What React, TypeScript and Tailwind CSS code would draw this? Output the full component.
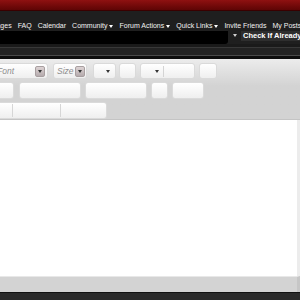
import type { ReactNode } from "react";

function Arrow({ color = "border-t-white" }: { color?: string }) {
    return <span className={`inline-block w-0 h-0 border-l-[2.5px] border-r-[2.5px] border-t-[3px] border-l-transparent border-r-transparent ${color}`} />;
}

function NavItem({ label, menu }: { label: string; menu?: boolean }) {
    return (
        <span className="flex items-center gap-[2px] whitespace-nowrap">
            {label}
            {menu && <Arrow />}
        </span>
    );
}

function Btn({ w, children, className = "" }: { w: string; children?: ReactNode; className?: string }) {
    return (
        <div className={`${w} shrink-0 h-full rounded-[3px] border border-[#dadada] bg-gradient-to-b from-[#ffffff] to-[#efefef] flex items-center ${className}`}>
            {children}
        </div>
    );
}

function DropBtn() {
    return (
        <span className="w-[10px] h-[11px] rounded-[2px] bg-gradient-to-b from-[#ddd3d4] to-[#b5abad] border border-[#a89fa0] flex items-center justify-center">
            <Arrow color="border-t-[#333]" />
        </span>
    );
}

export default function App() {
    return (
        <div className="w-[300px] h-[300px] overflow-hidden flex flex-col bg-[#1e1e1e] font-['Liberation_Sans',Arial,sans-serif]">
            {/* top red band */}
            <div className="h-[11px] shrink-0 bg-gradient-to-b from-[#8f1111] to-[#5e0505] border-b border-[#3a0000]" />

            {/* nav links */}
            <div className="h-[20px] shrink-0 bg-[#1f1f1f] pt-[10px]">
                <div className="flex gap-[6px] ml-[-44px] text-[7px] leading-[10px] text-[#f2f2f2]">
                    <NavItem label="Private Messages" />
                    <NavItem label="FAQ" />
                    <NavItem label="Calendar" />
                    <NavItem label="Community" menu />
                    <NavItem label="Forum Actions" menu />
                    <NavItem label="Quick Links" menu />
                    <NavItem label="Invite Friends" />
                    <NavItem label="My Posts" />
                </div>
            </div>

            {/* search row */}
            <div className="h-[13px] shrink-0 flex bg-[#1f1f1f]">
                <div className="w-[228px] bg-black rounded-br-[3px]" />
                <div className="w-[13px] flex justify-center pt-[3px]">
                    <Arrow color="border-t-[#cfcfcf]" />
                </div>
                <div className="h-[10px] flex-1 bg-[#2e2e2e] pl-[2px] text-[7.5px] leading-[10px] font-bold text-white whitespace-nowrap overflow-hidden">
                    Check If Already Posted
                </div>
            </div>

            {/* dark separator band */}
            <div className="h-[4px] shrink-0 bg-[#1a1a1a] border-b border-[#383838]" />
            <div className="h-[8px] shrink-0 bg-[#232323] border-b border-[#4a4a4a]" />
            <div className="h-[3px] shrink-0 bg-[#0e0e0e]" />

            {/* editor toolbar */}
            <div className="h-[61px] shrink-0 bg-gradient-to-b from-[#ececec] to-[#d3d3d3] to-[45%] border-b border-[#c4c4c4] pt-[4px] flex flex-col gap-[3px]">
                <div className="h-[16px] flex gap-[4px] ml-[-12px]">
                    <Btn w="w-[60px]" className="pl-[8px] pr-[2px] justify-between">
                        <span className="text-[8.5px] italic text-[#8f8f8f]">Font</span>
                        <DropBtn />
                    </Btn>
                    <Btn w="w-[34px]" className="ml-[1px] pl-[3px] pr-[1px] justify-between">
                        <span className="text-[8.5px] italic text-[#8f8f8f]">Size</span>
                        <DropBtn />
                    </Btn>
                    <Btn w="w-[23px]" className="ml-[2px] justify-end pr-[5px]">
                        <Arrow color="border-t-[#333]" />
                    </Btn>
                    <Btn w="w-[17px]" className="ml-[-1px]" />
                    <Btn w="w-[55px]" className="pl-[14px]">
                        <Arrow color="border-t-[#333]" />
                        <span className="ml-[4px] w-px h-[11px] bg-[#d4d4d4]" />
                    </Btn>
                    <Btn w="w-[18px]" />
                </div>
                <div className="h-[17px] flex gap-[4px] ml-[-10px]">
                    <Btn w="w-[24px]" />
                    <Btn w="w-[62px]" className="ml-[1px]" />
                    <Btn w="w-[62px]" />
                    <Btn w="w-[17px]" />
                    <Btn w="w-[32px]" />
                </div>
                <div className="h-[17px] flex ml-[-36px]">
                    <Btn w="w-[143px]">
                        <span className="ml-[47px] w-px h-[13px] bg-[#d6d6d6]" />
                        <span className="ml-[47px] w-px h-[13px] bg-[#d6d6d6]" />
                    </Btn>
                </div>
            </div>

            {/* editor text area */}
            <div className="h-[156px] shrink-0 bg-white border-r-[3px] border-[#ececec]" />

            {/* bottom strip */}
            <div className="h-[16px] shrink-0 bg-[#d3d3d3] border-t border-[#e8e8e8] border-r-[3px] border-r-[#c6c6c6]" />
            <div className="flex-1 bg-[#2a2a2a] border-t border-[#111]" />
        </div>
    );
}
